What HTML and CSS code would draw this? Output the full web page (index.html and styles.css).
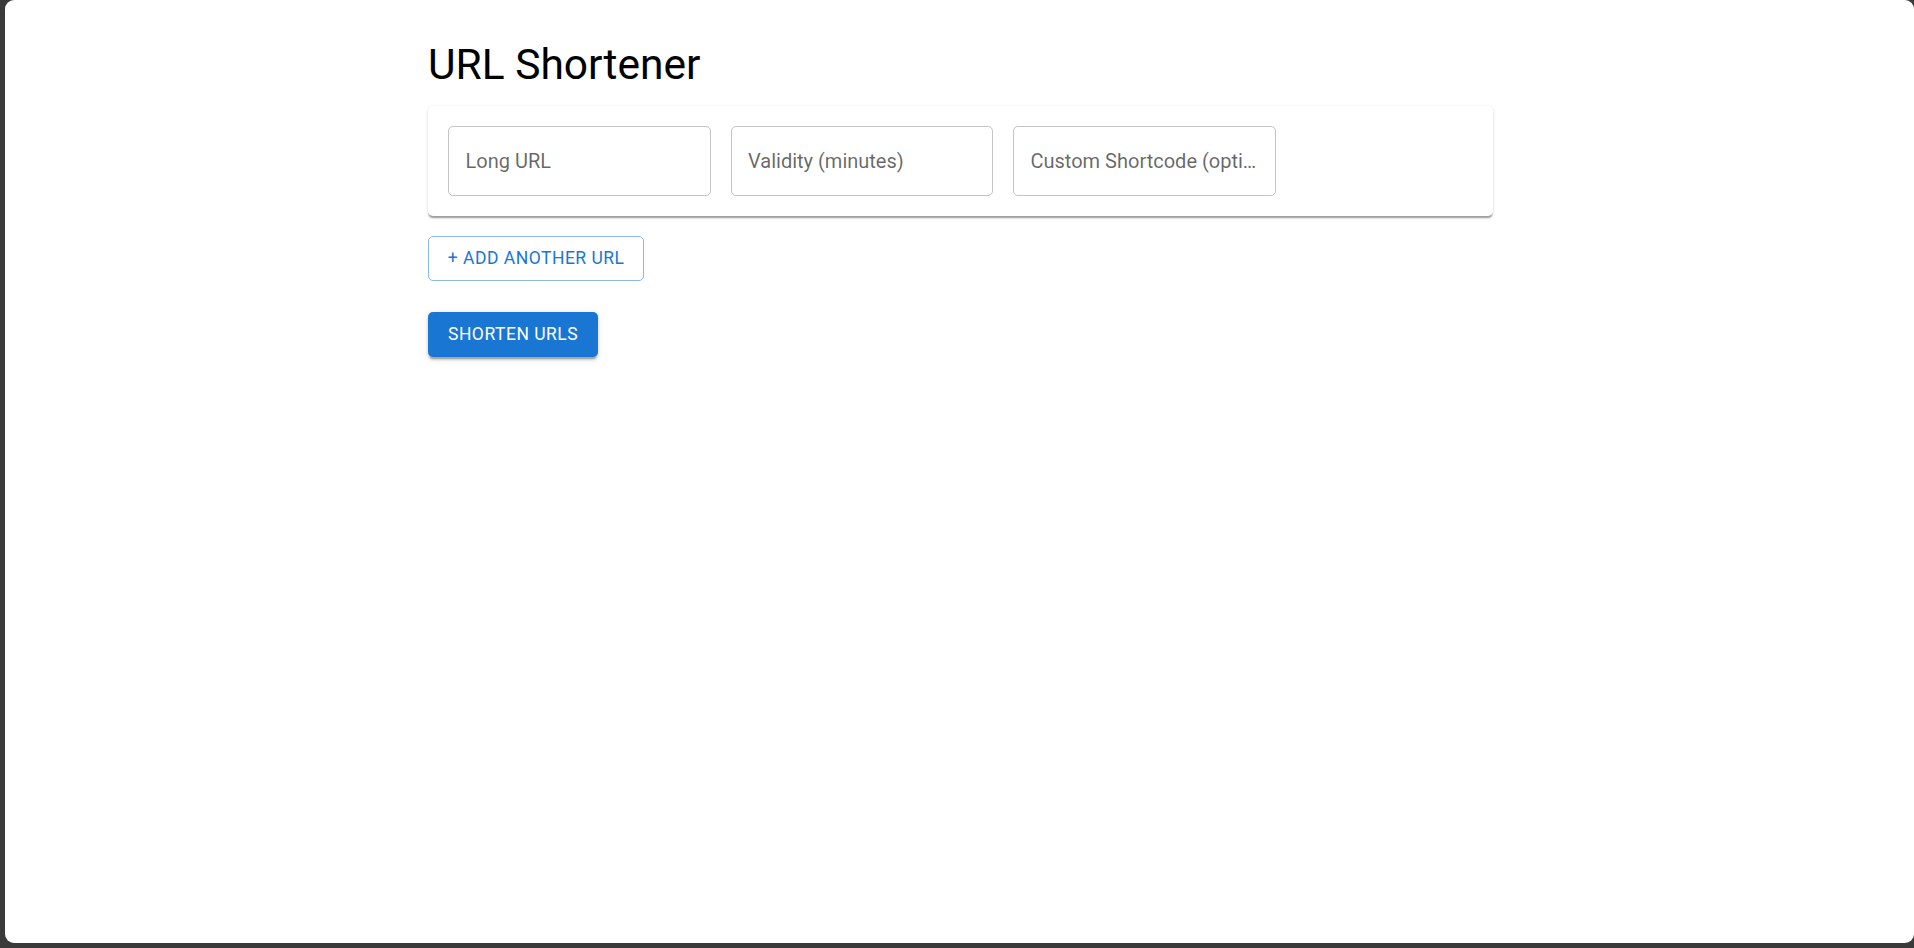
FILE: index.html
```html
<!DOCTYPE html>
<html lang="en">
<head>
<meta charset="utf-8">
<title>URL Shortener</title>
<link rel="stylesheet" href="styles.css">
</head>
<body>
<div class="window">
  <main class="container">
    <h1 class="title">URL Shortener</h1>
    <section class="card">
      <div class="row">
        <input class="field" type="text" placeholder="Long URL">
        <input class="field" type="text" placeholder="Validity (minutes)">
        <input class="field" type="text" placeholder="Custom Shortcode (optional)">
      </div>
    </section>
    <div class="actions">
      <button class="btn btn-outlined" type="button">+ Add Another URL</button>
    </div>
    <div class="submit">
      <button class="btn btn-contained" type="button">Shorten URLs</button>
    </div>
  </main>
</div>
</body>
</html>
```
FILE: styles.css
```css
* { box-sizing: border-box; }
html, body { margin: 0; height: 100%; }
body {
  background: #3a3a3a;
  font-family: Roboto, "Liberation Sans", Arial, sans-serif;
  overflow: hidden;
}
.window {
  height: 943px;
  margin-left: 5px;
  background: #ffffff;
  border-radius: 9px;
  overflow: hidden;
}
.container {
  max-width: 1125px;
  margin: 0 auto;
  padding: 39px 29px 0 31px;
}
.title {
  margin: 0 0 14px;
  font-size: 42.5px;
  font-weight: 400;
  line-height: 52.5px;
  color: #000;
}
.card {
  background: #fff;
  border-radius: 5px;
  padding: 20px;
  box-shadow: 0 2.5px 1.25px -1.25px rgba(0,0,0,0.2), 0 1.25px 1.25px 0 rgba(0,0,0,0.14), 0 1.25px 3.75px 0 rgba(0,0,0,0.12);
}
.row {
  display: flex;
  gap: 20px;
}
.field {
  width: 262.5px;
  height: 70px;
  padding: 0 10px 0 16.5px;
  border: 1px solid rgba(0, 0, 0, 0.23);
  border-radius: 5px;
  font-family: inherit;
  font-size: 20px;
  color: rgba(0, 0, 0, 0.87);
  background: transparent;
  text-overflow: ellipsis;
  outline: none;
}
.field::placeholder {
  color: rgba(0, 0, 0, 0.6);
  opacity: 1;
}
.actions { margin-top: 20px; }
.submit { margin-top: 31px; }
.btn {
  font-family: inherit;
  font-size: 17.5px;
  font-weight: 400;
  letter-spacing: 0.5px;
  line-height: 30.6px;
  text-transform: uppercase;
  border-radius: 5px;
  cursor: pointer;
}
.btn-outlined {
  padding: 6.25px 18.75px;
  color: #1976d2;
  background: transparent;
  border: 1px solid rgba(25, 118, 210, 0.5);
}
.btn-contained {
  padding: 7.5px 20px;
  color: #fff;
  background: #1976d2;
  border: 0;
  box-shadow: 0 3.75px 1.25px -2.5px rgba(0,0,0,0.2), 0 2.5px 2.5px 0 rgba(0,0,0,0.14), 0 1.25px 6.25px 0 rgba(0,0,0,0.12);
}
```
